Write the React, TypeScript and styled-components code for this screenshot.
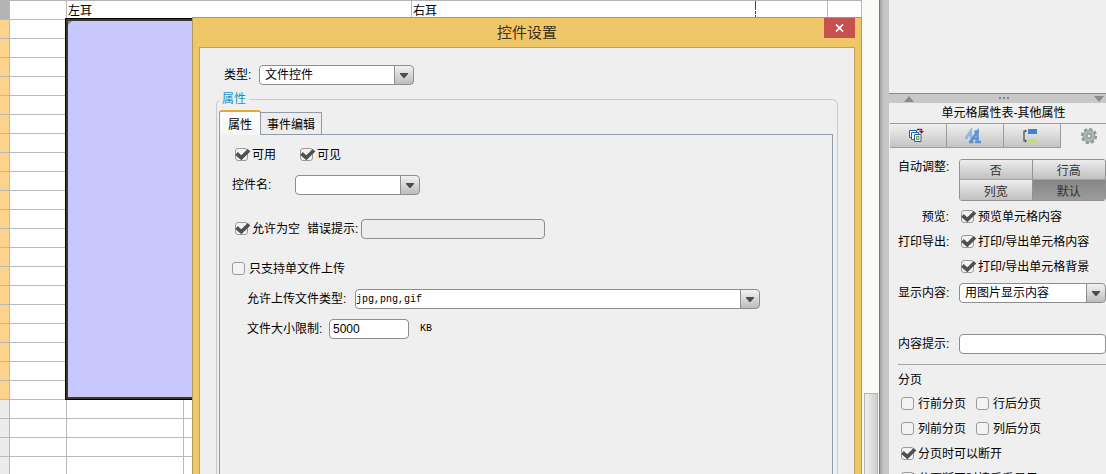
import React from "react";
import styled, { createGlobalStyle, css } from "styled-components";

const Global = createGlobalStyle`
  *, *::before, *::after { box-sizing: border-box; }
  html, body { margin: 0; }
  body, button, input, select {
    font-family: "Liberation Sans", "Noto Sans CJK SC", sans-serif;
    font-size: 12px;
    color: #000;
  }
  body { overflow: hidden; }
`;

const Shell = styled.div`
  display: grid;
  grid-template-columns: minmax(0, 1fr) 17px 10px 217px;
  height: 100vh;
  overflow: hidden;
  background: #efefef;
  line-height: 16px;
`;

const Workspace = styled.main`
  position: relative;
  overflow: hidden;
  background: #fff;
`;

/* ---------- spreadsheet ---------- */

const Sheet = styled.table`
  width: 100%;
  table-layout: fixed;
  border-collapse: separate;
  border-spacing: 0;
  border-top: 1px solid #b4b4b4;
`;

const Col = styled.col<{ $w?: number }>`
  width: ${(p) => (p.$w ? `${p.$w}px` : "auto")};
`;

const Cell = styled.td<{ $pageBreak?: boolean }>`
  height: 19px;
  padding: 2px 0 0 1px;
  line-height: 16px;
  white-space: nowrap;
  border-right: 1px solid #b9b9b9;
  border-bottom: 1px solid #b9b9b9;
  ${(p) =>
    p.$pageBreak &&
    css`
      border-right: 0;
      background: linear-gradient(#b8143c 9px, #fff 9px, #fff 10px, #b8143c 10px, #b8143c 13px, #fff 13px, #fff 14px, #b8143c 14px)
        right / 1px 100% no-repeat;
    `}
`;

const RowHead = styled.th<{ $tone: "corner" | "active" | "idle" }>`
  height: 19px;
  padding: 0;
  border-right: 1px solid #b9b9b9;
  border-bottom: 1px solid #b9b9b9;
  background: ${(p) => ({ corner: "#b4b4b4", active: "#fdd28c", idle: "#ececec" })[p.$tone]};
`;

const SelectedCell = styled(Cell)`
  position: relative;
  background: #c8c8ff;
  &::before {
    content: "";
    position: absolute;
    top: 1px;
    left: 1px;
    border-top: 4px solid #9482b4;
    border-right: 4px solid transparent;
  }
  &::after {
    content: "";
    position: absolute;
    inset: -2px -2px -1px -2px;
    border: 1px solid #000;
    box-shadow: inset 0 0 0 2px #3c3a22;
  }
`;

/* ---------- dialog ---------- */

const Dialog = styled.section`
  position: absolute;
  inset: 17px 0 -12px 192px;
  display: flex;
  flex-direction: column;
  padding: 0 6px;
  border: 1px solid #b3985a;
  background: #efc668;
`;

const TitleBar = styled.header`
  display: grid;
  grid-template-columns: 31px 1fr 31px;
  align-items: start;
  height: 29px;
`;

const DialogTitle = styled.h1`
  grid-column: 2;
  margin: 0;
  font-size: 15px;
  font-weight: 400;
  line-height: 30px;
  text-align: center;
  color: #3d3218;
`;

const CloseButton = styled.button`
  display: grid;
  place-items: center;
  height: 20px;
  padding: 0;
  border: 0;
  background: #c75050;
`;

const DialogBody = styled.div`
  flex: 1;
  display: flex;
  flex-direction: column;
  padding: 17px 16px 0;
  border: 1px solid #bfa15c;
  background: #efefef;
`;

const Row = styled.div<{ $indent?: number; $gap?: number; $end?: number; $before?: number }>`
  display: flex;
  align-items: center;
  gap: ${(p) => p.$gap ?? 0}px;
  height: 20px;
  margin-top: ${(p) => p.$before ?? 0}px;
  padding-left: ${(p) => p.$indent ?? 0}px;
  padding-right: ${(p) => p.$end ?? 0}px;
  white-space: nowrap;
`;

const Caption = styled.label<{ $w: number }>`
  flex: none;
  width: ${(p) => p.$w}px;
`;

const Group = styled.fieldset`
  flex: 1;
  display: flex;
  flex-direction: column;
  min-width: 0;
  margin: 7px 0 0;
  padding: 4px 4px 0 2px;
  border: 1px solid #c6cad0;
  border-bottom: 0;
  border-radius: 6px 6px 0 0;
`;

const Legend = styled.legend`
  padding: 0 3px;
  line-height: 14px;
  color: #1492c8;
`;

const TabList = styled.div`
  display: flex;
  align-items: flex-end;
  height: 24px;
`;

const Tab = styled.button<{ $active?: boolean }>`
  height: 22px;
  padding: 0 6px;
  border: 1px solid #8f9ba8;
  border-bottom: 0;
  border-left: 0;
  background: #ededed;
  ${(p) =>
    p.$active &&
    css`
      position: relative;
      height: 25px;
      margin-bottom: -1px;
      padding: 0 8px;
      border-left: 1px solid #8f9ba8;
      border-top: 2px solid #e0a92c;
      border-radius: 3px 3px 0 0;
      background: linear-gradient(#fff, #f6f6f6);
    `}
`;

const Panel = styled.div`
  flex: 1;
  display: flex;
  flex-direction: column;
  gap: 20px;
  padding: 10px 0 0 12px;
  border: 1px solid #8f9ba8;
  border-bottom: 0;
`;

const Stack = styled.div`
  display: flex;
  flex-direction: column;
  gap: 10px;
`;

/* ---------- form controls ---------- */

const CheckLabel = styled.label`
  display: inline-flex;
  align-items: center;
  gap: 3px;
  white-space: nowrap;
`;

const TickBox = styled.span`
  position: relative;
  display: block;
  width: 14px;
  height: 14px;
  svg {
    position: absolute;
    top: 0;
    left: 0;
    display: none;
    pointer-events: none;
  }
  input:checked + svg { display: block; }
`;

const TickInput = styled.input`
  appearance: none;
  display: block;
  width: 13px;
  height: 13px;
  margin: 0;
  border: 1px solid #9a9a9a;
  border-radius: 3px;
  background: #f3f3f3;
`;

function Check({ text, checked }: { text: string; checked?: boolean }) {
  return (
    <CheckLabel>
      <TickBox>
        <TickInput type="checkbox" defaultChecked={checked} />
        <svg width="16" height="14" viewBox="0 0 16 14" fill="none">
          <path d="M1.500 5.500 6.300 9.800 14 2.200" stroke="#505050" strokeWidth="3.700" />
        </svg>
      </TickBox>
      {text}
    </CheckLabel>
  );
}

const TextBox = styled.input<{ $w?: number }>`
  width: ${(p) => (p.$w ? `${p.$w}px` : "100%")};
  height: 20px;
  padding: 0 3px;
  border: 1px solid #8e8e8e;
  border-radius: 4px;
  background: #fff;
  &:disabled { background: #ededed; }
`;

const ComboFrame = styled.span<{ $w?: number }>`
  display: flex;
  ${(p) => (p.$w ? css`width: ${p.$w}px;` : css`flex: 1;`)}
  height: 20px;
  overflow: hidden;
  border: 1px solid #8e8e8e;
  border-radius: 4px;
  background: linear-gradient(to right, transparent calc(100% - 19px), #8e8e8e 0, #8e8e8e calc(100% - 18px), transparent 0),
    linear-gradient(#f2f2f2, #bcbcbc) right / 18px 100% no-repeat, #fff;
  position: relative;
  svg {
    position: absolute;
    right: 3px;
    top: 6px;
    pointer-events: none;
  }
`;

const ComboSelect = styled.select<{ $mono?: boolean }>`
  appearance: none;
  flex: 1;
  min-width: 0;
  padding: 0 20px 0 5px;
  border: 0;
  background: transparent;
  ${(p) =>
    p.$mono &&
    css`
      padding-left: 0;
      font-family: "Liberation Mono", monospace;
      font-size: 10px;
    `}
`;

function Combo({ id, value, width, mono }: { id: string; value: string; width?: number; mono?: boolean }) {
  return (
    <ComboFrame $w={width}>
      <ComboSelect id={id} $mono={mono} defaultValue={value}>
        <option value={value}>{value}</option>
      </ComboSelect>
      <svg width="12" height="7" viewBox="0 0 12 7">
        <path d="M2 1h8v1L6.5 6h-1L2 2z" fill="#4d4d4d" />
      </svg>
    </ComboFrame>
  );
}

const Unit = styled.span`
  margin-left: 11px;
  font-family: "Liberation Mono", monospace;
  font-size: 10px;
`;

/* ---------- scroll bar and divider ---------- */

const ScrollTrack = styled.div`
  display: flex;
  flex-direction: column;
  padding: 393px 1px 0 2px;
  background: #fafaf7;
`;

const ScrollThumb = styled.div`
  flex: 1;
  border: 1px solid #b4b4b4;
  border-bottom: 0;
  background: linear-gradient(to right, #f0f0f0, #cfcfcf);
`;

const Divider = styled.div`
  border-left: 1px solid #777;
  background: linear-gradient(to right, #a4a4a4, #c6c6c6 4px);
`;

/* ---------- property sidebar ---------- */

const Sidebar = styled.aside`
  overflow: hidden;
  white-space: nowrap;
`;

const TopPane = styled.div`
  height: 94px;
  border-bottom: 1px solid #8a8a8a;
`;

const Splitter = styled.div`
  display: flex;
  justify-content: space-between;
  align-items: center;
  height: 9px;
  padding: 0 1px 0 14px;
  background: #c8c8c8;
`;

const SideTitle = styled.h2`
  margin: 0;
  padding-left: 12px;
  font-size: 12px;
  font-weight: 400;
  line-height: 20px;
  text-align: center;
`;

const SideTabs = styled.div`
  display: flex;
  padding-left: 1px;
`;

const SideTab = styled.button<{ $active?: boolean }>`
  flex: none;
  display: grid;
  place-items: center;
  width: 57px;
  height: 25px;
  padding: 0 4px 0 0;
  border: solid #9c9c9c;
  border-width: 1px 1px 1px 0;
  background: linear-gradient(#f0f0f0, #c4c4c4);
  ${(p) =>
    p.$active &&
    css`
      padding: 0;
      border-color: #9c9c9c transparent transparent;
      background: #efefef;
    `}
`;

const SideForm = styled.div`
  padding: 11px 0 0 9px;
`;

const Field = styled.div<{ $tall?: boolean; $before?: number }>`
  display: grid;
  grid-template-columns: 51px minmax(0, 1fr);
  column-gap: 10px;
  align-items: center;
  height: ${(p) => (p.$tall ? 28 : 25)}px;
  margin-top: ${(p) => p.$before ?? 0}px;
`;

const FieldName = styled.label`
  grid-column: 1;
  text-align: right;
`;

const FieldValue = styled.div`
  grid-column: 2;
  display: flex;
`;

const CheckValue = styled(FieldValue)`
  padding-left: 2px;
`;

const AdjustField = styled(Field)`
  align-items: start;
  height: 42px;
  margin-bottom: 3px;
`;

const Segments = styled.div`
  display: grid;
  grid-template-columns: 1fr 1fr;
  overflow: hidden;
  border: 1px solid #929292;
  border-radius: 3px;
`;

const Segment = styled.button<{ $on?: boolean }>`
  height: 20px;
  padding: 0;
  border: 0;
  color: #333;
  background: ${(p) => (p.$on ? "linear-gradient(#868686, #9c9c9c)" : "linear-gradient(#ededed, #c0c0c0)")};
  &:nth-child(odd) { border-right: 1px solid #929292; }
  &:nth-child(-n + 2) { border-bottom: 1px solid #a4a4a4; }
`;

const Rule = styled.hr`
  height: 1px;
  margin: 6px 0 2px;
  border: 0;
  background: #a4a4a4;
`;

const SectionName = styled.h3`
  margin: 0;
  font-size: 12px;
  font-weight: 400;
  line-height: 26px;
  height: 24px;
`;

const CheckRow = styled.div`
  display: flex;
  align-items: center;
  gap: 10px;
  height: 25px;
  padding-left: 3px;
`;

/* ---------- icons ---------- */

const LayersIcon = () => (
  <svg width="16" height="16" viewBox="0 0 16 16" fill="none">
    <path d="M1.500 2.500h7v7h-7z" fill="#fff" stroke="#1f64a0" />
    <path d="M3.500 4.500h7v7h-7z" fill="#fff" stroke="#1f64a0" />
    <path d="M6.500 6.500h6.500v7h-6.500z" fill="#fff" stroke="#1f64a0" />
    <path d="M8.500 8.500h2.500v3h-2.500z" fill="#f8ec6a" stroke="#6f9a3a" />
    <path d="M9 1.500h4.500V3" stroke="#9c1c1c" strokeWidth="1.300" />
    <path d="M11 3h5l-2.500 2.800z" fill="#9c1c1c" />
  </svg>
);

const LettersIcon = () => (
  <svg width="18" height="16" viewBox="0 0 18 16" fill="none">
    <path d="M2 9.500 7 2.500v8M3.500 7.500h5M1 10h3" stroke="#8fb6e6" strokeWidth="2.200" />
    <path d="M6.500 13.500 13.500 3.500v10M9 10.500h6M5 14h4.500M11 14H17M10.500 3.500H15" stroke="#5a92d8" strokeWidth="2.300" />
  </svg>
);

const TreeIcon = () => (
  <svg width="16" height="16" viewBox="0 0 16 16" fill="none">
    <path d="M4 3H2v10h2" stroke="#4a4a4a" strokeWidth="1.200" />
    <path d="M3 1.500 5 3 3 4.500zM3 11.500 5 13 3 14.500z" fill="#4a4a4a" />
    <path d="M6 1h9v5H6z" fill="#3f83d4" />
    <path d="M6 11h9v3.500H6z" fill="#bfe070" />
  </svg>
);

const GearIcon = () => (
  <svg width="18" height="18" viewBox="0 0 18 18" fill="none">
    <circle cx="9" cy="9" r="6.800" stroke="#8f9898" strokeWidth="2.600" strokeDasharray="3.200 2.140" />
    <circle cx="9" cy="9" r="4.600" fill="#a9b2b2" stroke="#98a2a2" strokeWidth="3.600" />
    <circle cx="9" cy="9" r="4.200" stroke="#b9c1c1" strokeWidth="1.400" />
    <circle cx="9" cy="9" r="2" fill="#efefef" stroke="#868f8f" />
  </svg>
);

const IDLE_ROWS = [0, 1, 2, 3];
const SELECTED_ROWS = Array.from({ length: 20 }, (_, i) => i);

export default function App() {
  return (
    <>
      <Global />
      <Shell>
        <Workspace>
          <Sheet>
            <colgroup>
              <Col $w={10} />
              <Col $w={57} />
              <Col $w={117} />
              <Col $w={228} />
              <Col $w={344} />
              <Col $w={72} />
              <Col />
            </colgroup>
            <tbody>
              <tr>
                <RowHead $tone="corner" />
                <Cell />
                <Cell colSpan={2}>左耳</Cell>
                <Cell $pageBreak>右耳</Cell>
                <Cell />
                <Cell />
              </tr>
              {SELECTED_ROWS.map((i) => (
                <tr key={i}>
                  <RowHead $tone="active" />
                  <Cell />
                  {i === 0 && <SelectedCell rowSpan={20} colSpan={2} />}
                  <Cell />
                  <Cell />
                  <Cell />
                </tr>
              ))}
              {IDLE_ROWS.map((i) => (
                <tr key={i}>
                  <RowHead $tone="idle" />
                  <Cell />
                  <Cell />
                  <Cell />
                  <Cell />
                  <Cell />
                  <Cell />
                </tr>
              ))}
            </tbody>
          </Sheet>

          <Dialog role="dialog" aria-labelledby="dialog-title">
            <TitleBar>
              <DialogTitle id="dialog-title">控件设置</DialogTitle>
              <CloseButton aria-label="关闭">
                <svg width="9" height="8" viewBox="0 0 9 8">
                  <path d="M1 .5 8 7.500M8 .5 1 7.500" stroke="#fff" strokeWidth="1.700" />
                </svg>
              </CloseButton>
            </TitleBar>
            <DialogBody>
              <Row $indent={8}>
                <Caption $w={35} htmlFor="kind">类型:</Caption>
                <Combo id="kind" value="文件控件" width={155} />
              </Row>
              <Group>
                <Legend>属性</Legend>
                <TabList role="tablist">
                  <Tab role="tab" aria-selected $active>属性</Tab>
                  <Tab role="tab">事件编辑</Tab>
                </TabList>
                <Panel role="tabpanel">
                  <Stack>
                    <Row $indent={3} $gap={24}>
                      <Check text="可用" checked />
                      <Check text="可见" checked />
                    </Row>
                    <Row>
                      <Caption $w={63} htmlFor="name">控件名:</Caption>
                      <Combo id="name" value="" width={125} />
                    </Row>
                  </Stack>
                  <Row $indent={3} $gap={7} $before={4}>
                    <Check text="允许为空" checked />
                    <Row>
                      <Caption $w={54} htmlFor="error">错误提示:</Caption>
                      <TextBox id="error" $w={184} disabled />
                    </Row>
                  </Row>
                  <Stack>
                    <Row>
                      <Check text="只支持单文件上传" />
                    </Row>
                    <Row $indent={15} $end={72}>
                      <Caption $w={108} htmlFor="types">允许上传文件类型:</Caption>
                      <Combo id="types" value="jpg,png,gif" mono />
                    </Row>
                    <Row $indent={15}>
                      <Caption $w={82} htmlFor="limit">文件大小限制:</Caption>
                      <TextBox id="limit" $w={80} defaultValue="5000" />
                      <Unit>KB</Unit>
                    </Row>
                  </Stack>
                </Panel>
              </Group>
            </DialogBody>
          </Dialog>
        </Workspace>

        <ScrollTrack>
          <ScrollThumb />
        </ScrollTrack>
        <Divider />

        <Sidebar>
          <TopPane />
          <Splitter>
            <svg width="12" height="6" viewBox="0 0 12 6"><path d="M6 0 11 6H1z" fill="#8a8a8a" /></svg>
            <svg width="12" height="3" viewBox="0 0 12 3"><path d="M1 0h2v2H1zM5 0h2v2H5zM9 0h2v2H9z" fill="#858585" /></svg>
            <svg width="12" height="6" viewBox="0 0 12 6"><path d="M1 0h10L6 6z" fill="#8a8a8a" /></svg>
          </Splitter>
          <SideTitle>单元格属性表-其他属性</SideTitle>
          <SideTabs role="tablist">
            <SideTab role="tab" aria-label="扩展"><LayersIcon /></SideTab>
            <SideTab role="tab" aria-label="样式"><LettersIcon /></SideTab>
            <SideTab role="tab" aria-label="形态"><TreeIcon /></SideTab>
            <SideTab role="tab" aria-label="其他" aria-selected $active><GearIcon /></SideTab>
          </SideTabs>
          <SideForm>
            <AdjustField>
              <FieldName as="span">自动调整:</FieldName>
              <Segments>
                <Segment>否</Segment>
                <Segment>行高</Segment>
                <Segment>列宽</Segment>
                <Segment $on>默认</Segment>
              </Segments>
            </AdjustField>
            <Field>
              <FieldName as="span">预览:</FieldName>
              <CheckValue><Check text="预览单元格内容" checked /></CheckValue>
            </Field>
            <Field>
              <FieldName as="span">打印导出:</FieldName>
              <CheckValue><Check text="打印/导出单元格内容" checked /></CheckValue>
            </Field>
            <Field>
              <CheckValue><Check text="打印/导出单元格背景" checked /></CheckValue>
            </Field>
            <Field $tall>
              <FieldName htmlFor="display">显示内容:</FieldName>
              <FieldValue><Combo id="display" value="用图片显示内容" /></FieldValue>
            </Field>
            <Field $tall $before={23}>
              <FieldName htmlFor="hint">内容提示:</FieldName>
              <FieldValue><TextBox id="hint" /></FieldValue>
            </Field>
            <Rule />
            <SectionName>分页</SectionName>
            <CheckRow><Check text="行前分页" /><Check text="行后分页" /></CheckRow>
            <CheckRow><Check text="列前分页" /><Check text="列后分页" /></CheckRow>
            <CheckRow><Check text="分页时可以断开" checked /></CheckRow>
            <CheckRow><Check text="分页断开时接后重显示" checked /></CheckRow>
          </SideForm>
        </Sidebar>
      </Shell>
    </>
  );
}
